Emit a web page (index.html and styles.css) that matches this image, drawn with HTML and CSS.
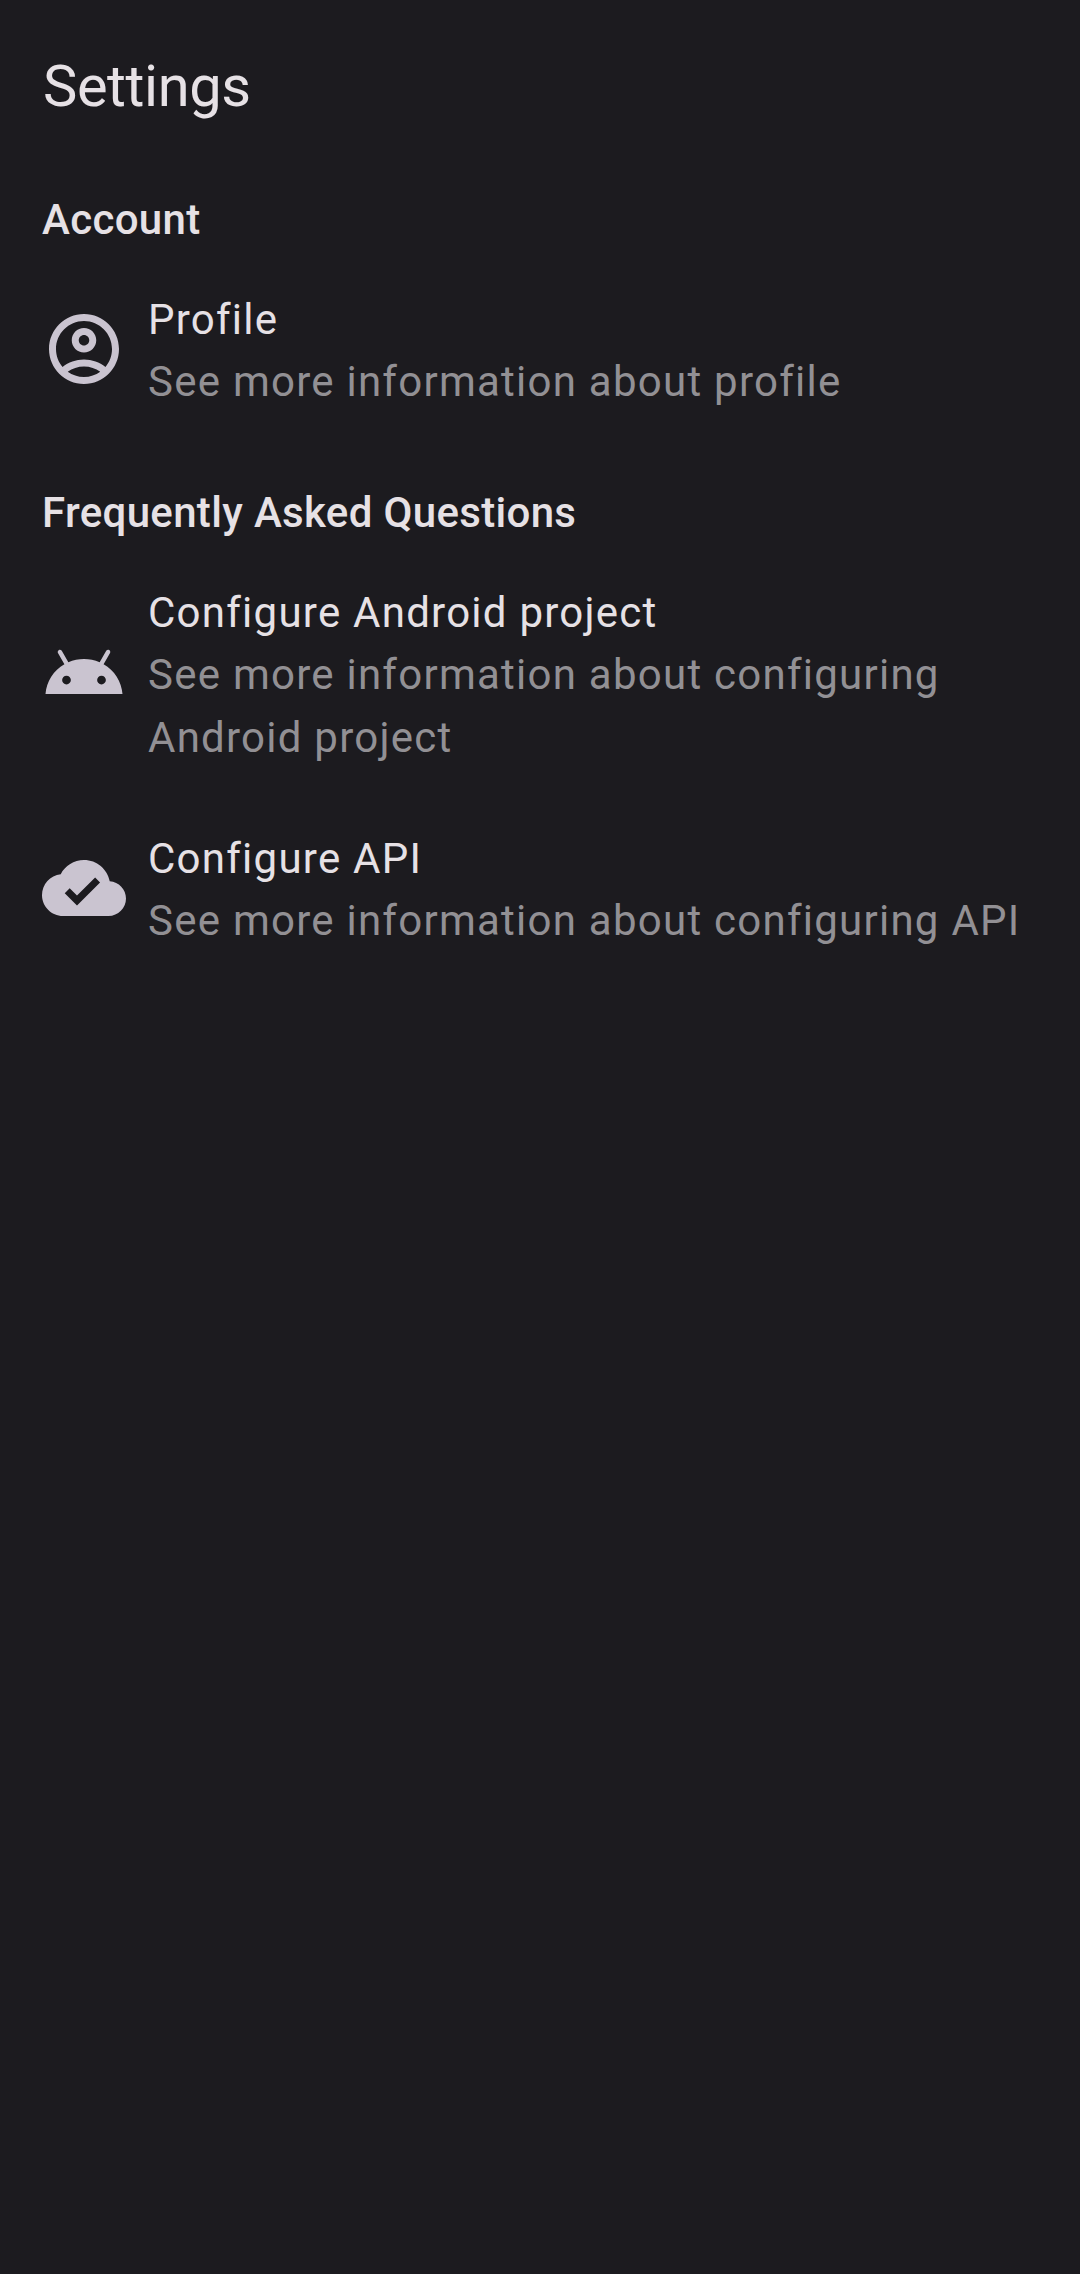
FILE: index.html
```html
<!DOCTYPE html>
<html lang="en">
<head>
<meta charset="utf-8">
<title>Settings</title>
<link rel="stylesheet" href="styles.css">
</head>
<body>
<main class="screen">
  <h1 class="title">Settings</h1>
  <section class="section">
    <h2 class="heading">Account</h2>
    <div class="item">
      <svg class="icon" viewBox="0 0 24 24"><path fill-rule="evenodd" d="M12 2C6.48 2 2 6.48 2 12s4.48 10 10 10 10-4.48 10-10S17.52 2 12 2zM7.35 18.5C8.66 17.56 10.26 17 12 17s3.34.56 4.65 1.5C15.34 19.44 13.74 20 12 20s-3.34-.56-4.65-1.5zm10.79-1.38C16.45 15.8 14.32 15 12 15s-4.45.8-6.14 2.12C4.7 15.73 4 13.95 4 12c0-4.42 3.58-8 8-8s8 3.58 8 8c0 1.95-.7 3.73-1.86 5.12zM12 6c-1.93 0-3.5 1.57-3.5 3.5S10.07 13 12 13s3.5-1.57 3.5-3.5S13.93 6 12 6zm0 5c-.83 0-1.5-.67-1.5-1.5S11.17 8 12 8s1.5.67 1.5 1.5S12.83 11 12 11z"/></svg>
      <div class="text"><p class="name">Profile</p><p class="detail">See more information about profile</p></div>
    </div>
  </section>
  <section class="section">
    <h2 class="heading">Frequently Asked Questions</h2>
    <div class="item">
      <svg class="icon" viewBox="0 0 24 24"><path d="M17.6 9.48l1.84-3.18c.16-.31.04-.69-.26-.85-.29-.15-.65-.06-.83.22l-1.88 3.24c-2.86-1.21-6.08-1.21-8.94 0L5.65 5.67c-.19-.29-.58-.38-.87-.2-.28.18-.37.54-.22.83L6.4 9.48C3.3 11.25 1.28 14.44 1 18h22c-.28-3.56-2.3-6.75-5.4-8.52zM7 15.25c-.69 0-1.25-.56-1.25-1.25s.56-1.25 1.25-1.25 1.25.56 1.25 1.25-.56 1.25-1.25 1.25zm10 0c-.69 0-1.25-.56-1.25-1.25s.56-1.25 1.25-1.25 1.25.56 1.25 1.25-.56 1.25-1.25 1.25z"/></svg>
      <div class="text"><p class="name">Configure Android project</p><p class="detail">See more information about configuring Android project</p></div>
    </div>
    <div class="item">
      <svg class="icon" viewBox="0 0 24 24"><path d="M19.35 10.04C18.67 6.59 15.64 4 12 4 9.11 4 6.6 5.64 5.35 8.04 2.34 8.36 0 10.91 0 14c0 3.31 2.69 6 6 6h13c2.76 0 5-2.24 5-5 0-2.64-2.05-4.78-4.65-4.96zM10 17l-3.5-3.5 1.41-1.41L10 14.17l5.18-5.17 1.41 1.41L10 17z"/></svg>
      <div class="text"><p class="name">Configure API</p><p class="detail">See more information about configuring API</p></div>
    </div>
  </section>
</main>
</body>
</html>
```
FILE: styles.css
```css
body {
  margin: 0;
  background: #1c1b1f;
  color: #e6e1e5;
  font-family: Roboto, sans-serif;
}

h1, h2, p {
  margin: 0;
}

.screen {
  box-sizing: border-box;
  min-height: 2274px;
  padding: 42px;
}

.title {
  margin-bottom: 20px;
  padding-left: 1px;
  font-size: 57.75px;
  font-weight: 400;
  line-height: 88px;
  letter-spacing: -0.4px;
}

.section {
  padding-top: 38px;
}

.heading {
  margin-bottom: 9px;
  font-size: 42px;
  font-weight: 500;
  line-height: 63px;
  letter-spacing: 0.33px;
}

.item {
  display: flex;
  align-items: center;
  gap: 22px;
  padding: 29px 0 30px;
}

.icon {
  flex: none;
  width: 84px;
  height: 84px;
  margin-bottom: 5px;
  fill: #cac4d0;
}

.text {
  flex: 1;
  font-size: 42px;
  line-height: 63px;
  letter-spacing: 1.25px;
}

.name {
  line-height: 61px;
}

.detail {
  color: #929094;
}
```
